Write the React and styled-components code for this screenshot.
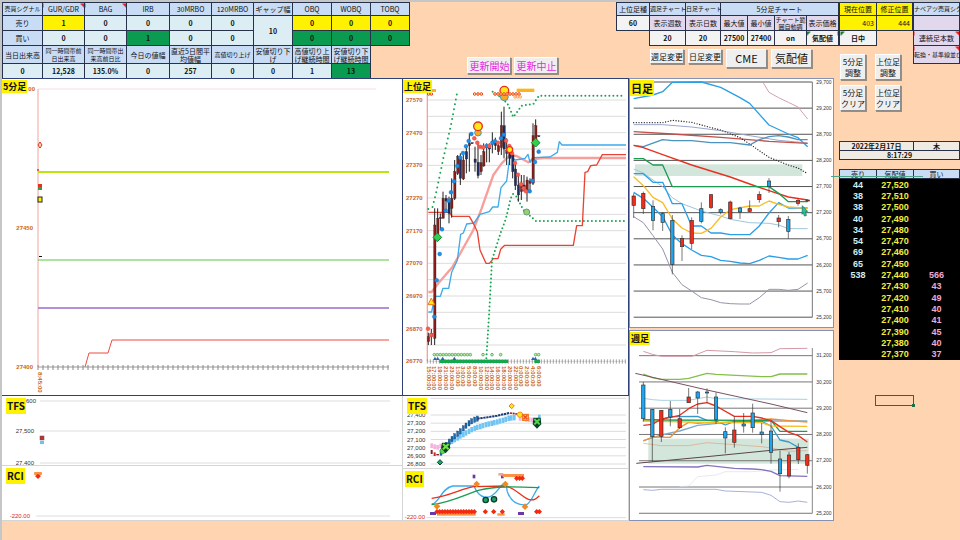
import styled, { createGlobalStyle, css } from 'styled-components'

const GlobalStyle = createGlobalStyle`
	* {
		box-sizing: border-box;
	}

	body {
		margin: 0;
		background: #ffd5b1;
		color: #111;
		font-family: 'Noto Sans CJK JP', 'Liberation Sans', sans-serif;
		font-size: 7px;
		line-height: 8px;
	}
`

const colors = {
	head: '#c9dcf5',
	value: '#dceef4',
	yellow: '#fff200',
	green: '#0a9b50',
	lavender: '#e2d8ee',
	plain: '#f3f3f3',
	navy: '#2f3f77',
	blue: '#2b9fe6',
	red: '#e8301f',
}

const Page = styled.div`
	display: flex;
	min-height: 100vh;
	overflow: hidden;
	border-top: 2px solid #c4c6c8;
	border-left: 2px solid #c4c6c8;
`

const Main = styled.main`
	flex: 1;
	min-width: 0;
`

const Side = styled.aside`
	flex: none;
	width: 121px;
`

const Header = styled.header`
	display: flex;
	justify-content: space-between;
	height: 76px;
`

const Table = styled.table`
	border-collapse: collapse;
	table-layout: fixed;
	width: ${({ $width }) => $width}px;
`

const Row = styled.tr`
	height: ${({ $height }) => $height}px;
`

const Cell = styled.td`
	padding: 0 ${({ $align }) => ($align === 'right' ? 2 : 0)}px 0 0;
	border: 1px solid #27324a;
	background: ${({ $bg }) => $bg || colors.value};
	font-weight: ${({ $bold }) => ($bold ? 700 : 400)};
	font-size: ${({ $small }) => ($small ? 6 : 7)}px;
	line-height: ${({ $tight }) => ($tight ? 7 : 8)}px;
	text-align: ${({ $align }) => $align || 'center'};
	white-space: nowrap;

	${({ $note }) =>
		$note &&
		css`
			background-image: linear-gradient(
				${$note === 'green' ? '135deg, #1a7a2c' : '225deg, #e02020'} 3px,
				transparent 3px
			);
		`}

	${({ $empty }) =>
		$empty &&
		css`
			border: none;
			background: none;
		`}
`

const Button = styled.button`
	padding: 0;
	border: 1px solid;
	border-color: #fff #8c8c8c #8c8c8c #fff;
	box-shadow: 1px 1px 0 #9a8d80;
	background: #efefef;
	color: ${({ $color }) => $color || '#111'};
	font-family: inherit;
	font-size: ${({ $size }) => $size || 8}px;
	line-height: 11px;
	width: ${({ $width }) => $width}px;
	height: ${({ $height }) => $height}px;
	white-space: nowrap;
	cursor: pointer;
`

const UpdateButtons = styled.div`
	display: flex;
	align-self: flex-end;
	gap: 3px;
	margin-bottom: 4px;
`

const ChangeButtons = styled.div`
	display: flex;
	align-items: flex-start;
	gap: 4px;
	padding: 3px 0 0 34px;
`

const Charts = styled.div`
	display: grid;
	grid-template-columns: 401fr 226fr 205fr;
	align-items: start;
	padding-right: 5px;
`

const ChartColumn = styled.div`
	display: grid;
	min-width: 0;
	gap: ${({ $gap }) => $gap || 0}px;
`

const Panel = styled.section`
	position: relative;
	background: #fff;
	border: 0 solid #d5d5d5;
	border-width: 0 1px 1px 0;

	${({ $kind }) =>
		$kind === 'main' &&
		css`
			border-color: ${colors.navy};
			border-width: 1px 1px 1px 0;
		`}

	${({ $kind }) =>
		$kind === 'boxed' &&
		css`
			border-color: #8592b5;
			border-width: 1px;
		`}
`

const PanelTitle = styled.h2`
	position: absolute;
	top: ${({ $inset }) => ($inset ? 2 : 1)}px;
	left: ${({ $inset }) => $inset || 0}px;
	margin: 0;
	padding: 0 1px;
	background: ${colors.yellow};
	font-size: ${({ $size }) => $size || 9}px;
	line-height: ${({ $tall }) => ($tall ? 16 : 13)}px;
	font-weight: 700;
	white-space: nowrap;
`

const Plot = styled.svg`
	display: block;
	width: 100%;
	height: auto;
`

const Line = styled.polyline`
	fill: none;
	stroke: ${({ $color }) => $color};
	stroke-width: ${({ $width }) => $width || 3};
	stroke-linejoin: round;

	${({ $dotted }) =>
		$dotted &&
		css`
			stroke-linecap: round;
			stroke-dasharray: 0 ${$dotted};
		`}
`

const AxisText = styled.text`
	fill: ${({ $color }) => $color || '#333'};
	font-family: 'Liberation Sans', sans-serif;
	font-size: ${({ $size }) => $size || 18}px;
	font-weight: ${({ $bold }) => ($bold ? 700 : 400)};
	text-anchor: ${({ $start }) => ($start ? 'start' : 'end')};
`

const SideTop = styled.div`
	display: flex;
	align-items: flex-start;
	height: 106px;
`

const SideButtons = styled.div`
	display: grid;
	grid-template-columns: 26px 26px;
	gap: 5px 9px;
	padding: 8px 0 0 1px;
`

const DateTable = styled(Table)`
	margin-top: 33px;
`

const Orders = styled.div`
	position: relative;
	margin-top: 9px;

	&::after {
		content: '';
		position: absolute;
		top: 7px;
		left: -8px;
		width: 92px;
		height: 1px;
		background: #4da58a;
	}
`

const OrderTable = styled(Table)`
	height: 191px;
	background: #000;
`

const OrderCell = styled.td`
	padding: 0;
	color: ${({ $color }) => $color};
	font-family: 'Liberation Sans', sans-serif;
	font-size: 9px;
	font-weight: 700;
	line-height: 10px;
	text-align: center;
`

const SelectedCell = styled.div`
	position: relative;
	width: 39px;
	height: 11px;
	margin: 35px 0 0 36px;
	border: 1px solid #1d7044;

	&::after {
		content: '';
		position: absolute;
		right: -2px;
		bottom: -2px;
		width: 3px;
		height: 3px;
		background: #1d7044;
	}
`

const Cols = ({ widths }) => (
	<colgroup>
		{widths.map((w, i) => (
			<col key={i} style={{ width: w }} />
		))}
	</colgroup>
)

const range = (from, to, step) => {
	const out = []
	for (let v = from; v <= to; v += step) out.push(v)
	return out
}

const SignalTable = () => (
	<Table $width={407}>
		<Cols widths={[40, 42, 42, 43, 42, 42, 39, 39, 39, 39]} />
		<tbody>
			<Row $height={13}>
				<Cell $small $bg={colors.head}>売買シグナル</Cell>
				<Cell $bg={colors.head} $note="red">GUR/GDR</Cell>
				<Cell $bg={colors.head} $note="red">BAG</Cell>
				{['IRB', '30MRBO', '120MRBO', 'ギャップ幅', 'OBQ', 'WOBQ', 'TOBQ'].map((t) => (
					<Cell key={t} $bg={colors.head}>{t}</Cell>
				))}
			</Row>
			<Row $height={15}>
				<Cell $bg={colors.head}>売り</Cell>
				<Cell $bold $bg={colors.yellow}>1</Cell>
				<Cell $bold>0</Cell>
				<Cell $bold>0</Cell>
				<Cell $bold>0</Cell>
				<Cell $bold>0</Cell>
				<Cell $bold rowSpan={2}>10</Cell>
				<Cell $bold $bg={colors.yellow}>0</Cell>
				<Cell $bold $bg={colors.yellow}>0</Cell>
				<Cell $bold $bg={colors.yellow}>0</Cell>
			</Row>
			<Row $height={15}>
				<Cell $bg={colors.head}>買い</Cell>
				<Cell $bold>0</Cell>
				<Cell $bold>0</Cell>
				<Cell $bold $bg={colors.green}>1</Cell>
				<Cell $bold>0</Cell>
				<Cell $bold>0</Cell>
				<Cell $bold $bg={colors.green}>0</Cell>
				<Cell $bold $bg={colors.green}>0</Cell>
				<Cell $bold $bg={colors.green}>0</Cell>
			</Row>
			<Row $height={18}>
				<Cell $bg={colors.head}>当日出来高</Cell>
				<Cell $small $bg={colors.head}>同一時間帯前<br />日出来高</Cell>
				<Cell $small $bg={colors.head}>同一時間帯出<br />来高前日比</Cell>
				<Cell $bg={colors.head}>今日の値幅</Cell>
				<Cell $bg={colors.head}>直近5日間平<br />均値幅</Cell>
				<Cell $small $bg={colors.head}>高値切り上げ</Cell>
				<Cell $bg={colors.head}>安値切り下<br />げ</Cell>
				<Cell $bg={colors.head}>高値切り上<br />げ継続時間</Cell>
				<Cell $bg={colors.head}>安値切り下<br />げ継続時間</Cell>
				<Cell $empty />
			</Row>
			<Row $height={15}>
				{['0', '12,528', '135.0%', '0', '257', '0', '0', '1'].map((v, i) => (
					<Cell key={i} $bold>{v}</Cell>
				))}
				<Cell $bold $bg={colors.green}>13</Cell>
				<Cell $empty />
			</Row>
		</tbody>
	</Table>
)

const SettingsTable = () => (
	<Table $width={222}>
		<Cols widths={[33, 36, 35, 27, 27, 32, 32]} />
		<tbody>
			<Row $height={13}>
				<Cell $bg={colors.head}>上位足種</Cell>
				<Cell $small $bg={colors.head}>週足チャート</Cell>
				<Cell $small $bg={colors.head}>日足チャート</Cell>
				<Cell $bg={colors.head} colSpan={4}>5分足チャート</Cell>
			</Row>
			<Row $height={15}>
				<Cell $bold $bg={colors.plain}>60</Cell>
				<Cell $bg={colors.lavender}>表示週数</Cell>
				<Cell $bg={colors.lavender}>表示日数</Cell>
				<Cell $bg={colors.lavender}>最大値</Cell>
				<Cell $bg={colors.lavender}>最小値</Cell>
				<Cell $small $tight $bg={colors.lavender}>チャート範<br />囲自動調</Cell>
				<Cell $bg={colors.lavender}>表示価格</Cell>
			</Row>
			<Row $height={15}>
				<Cell $empty />
				<Cell $bold $bg={colors.plain}>20</Cell>
				<Cell $bold $bg={colors.plain}>20</Cell>
				<Cell $bold $bg={colors.plain}>27500</Cell>
				<Cell $bold $bg={colors.plain}>27400</Cell>
				<Cell $bold $bg={colors.plain}>on</Cell>
				<Cell $bold $bg={colors.plain} $note="green">気配値</Cell>
			</Row>
		</tbody>
	</Table>
)

const FiveMinuteChart = () => (
	<Panel $kind="main">
		<Plot viewBox="2 79 400 316">
			<Line points="38,89 376,89" $color="#f6dcea" $width={1} />
			<Line points="38,89 38,367" $color="#f2a39b" $width={1} />
			<Line points="38,172 389,172" $color="#b9e610" $width={2} />
			<Line points="38,260 389,260" $color="#5cc845" $width={1} />
			<Line points="38,308 389,308" $color="#b391d6" $width={2} />
			<Line points="85,367 89,353 108,353 112,340 389,340" $color="#ef4b3f" $width={1} />
			<Line points="38,367 389,367" $color="#999" $width={1} />
			{range(38, 389, 5).map((x) => (
				<Line key={x} points={`${x},365 ${x},370`} $color="#888" $width={1} />
			))}
			<AxisText x="35" y="91" $color="#c8661c" $size={6} $bold>00</AxisText>
			<AxisText x="33" y="230" $color="#c8661c" $size={6} $bold>27450</AxisText>
			<AxisText x="33" y="369" $color="#c8661c" $size={6} $bold>27400</AxisText>
			<AxisText transform="translate(38 372) rotate(90)" $color="#c8661c" $size={6} $start $bold>8:45:00</AxisText>
			<path d="M40 142l2 3-2 3-2-3z" fill="#ffd9b0" stroke="#e8301f" />
			<circle cx="38" cy="170" r="1" fill="#e8301f" />
			<rect x="38" y="184" width="4" height="3" fill="#e8301f" />
			<rect x="38" y="187" width="4" height="3" fill="#2aa050" />
			<rect x="38" y="197" width="4" height="5" fill="#fff200" stroke="#222" />
			<rect x="39" y="256" width="3" height="1" fill="#111" />
		</Plot>
		<PanelTitle>5分足</PanelTitle>
	</Panel>
)

const FiveMinuteTfs = () => (
	<Panel>
		<Plot viewBox="2 396 400 69">
			{[401, 431, 463].map((y, i) => (
				<g key={y}>
					<Line points={`40,${y} 390,${y}`} $color="#ddd" $width={1} />
					<AxisText x={i ? 34 : 36} y={y + 2} $size={6}>{['600', '27,500', '27,400'][i]}</AxisText>
				</g>
			))}
			<rect x="40" y="436" width="4" height="4" fill="#c3302a" stroke="#555" strokeWidth="0.5" />
			<rect x="40" y="441" width="4" height="3" fill="#6cc3ef" />
		</Plot>
		<PanelTitle $inset={4} $size={10} $tall>TFS</PanelTitle>
	</Panel>
)

const FiveMinuteRci = () => (
	<Panel>
		<Plot viewBox="2 466 400 54">
			<Line points="36,516 390,516" $color="#ddd" $width={1} />
			<AxisText x="30" y="518" $color="#d8261c" $size={6}>-220.00</AxisText>
			<rect x="34" y="472" width="8" height="3" rx="1" fill="#fb9344" />
			<path d="M38 474l3 2-3 3-3-3z" fill="#f22a10" />
		</Plot>
		<PanelTitle $inset={4} $size={10} $tall>RCI</PanelTitle>
	</Panel>
)

// x, high, low, body top, body bottom, rising
const upperCandles = [
	[85, 773, 810, 785, 800, 1], [94, 762, 810, 775, 785, 1], [104, 400, 810, 450, 790, 1],
	[113, 400, 480, 430, 478, 1], [121, 415, 465, 428, 431, 0], [129, 350, 430, 370, 430, 1],
	[138, 360, 412, 370, 378, 0], [147, 365, 445, 375, 415, 0], [155, 310, 428, 370, 400, 1],
	[164, 255, 375, 290, 370, 1], [173, 240, 300, 245, 295, 1], [181, 235, 330, 250, 310, 0],
	[190, 240, 315, 255, 312, 1], [199, 215, 295, 230, 252, 0], [208, 175, 290, 205, 212, 1],
	[216, 203, 206, 203, 206, 0], [225, 215, 290, 252, 262, 0], [234, 205, 310, 262, 302, 0],
	[243, 240, 300, 263, 290, 1], [251, 205, 275, 230, 273, 1], [260, 205, 262, 212, 218, 1],
	[268, 205, 262, 218, 222, 0], [277, 172, 235, 200, 208, 0], [286, 188, 225, 198, 212, 0],
	[295, 205, 240, 212, 230, 1], [304, 110, 240, 152, 218, 1], [312, 95, 250, 152, 222, 0],
	[320, 190, 270, 225, 235, 0], [329, 210, 270, 232, 250, 0], [338, 235, 310, 240, 290, 0],
	[346, 260, 345, 282, 332, 0], [355, 295, 380, 330, 360, 0], [364, 300, 375, 325, 350, 1],
	[372, 300, 350, 330, 345, 0], [381, 305, 380, 315, 350, 1], [390, 310, 350, 318, 325, 1],
	[399, 145, 330, 182, 325, 1], [407, 133, 200, 152, 200, 1], [416, 182, 185, 182, 185, 0],
]

const upperBlueDots = [
	[103, 725], [110, 616], [119, 537], [126, 463], [137, 407], [146, 377], [153, 352], [162, 319],
	[172, 273], [181, 248], [189, 234], [198, 214], [206, 198], [214, 177], [260, 213], [277, 203],
	[285, 199], [303, 190], [311, 179], [416, 230], [405, 261], [397, 317], [389, 349],
]

const upperRedDots = [
	[84, 761], [93, 780], [223, 190], [232, 203], [240, 215], [249, 217], [268, 213], [294, 203],
	[318, 197], [328, 213], [336, 235], [345, 264], [354, 299], [363, 328], [371, 340], [378, 349],
]

const upperHours = [15, 17, 19, 21, 23, 1, 3, 5, 8, 10, 12, 14, 16, 18, 20, 22, 0, 2, 4, 6]

const Diamond = ({ x, y, r, ...rest }) => (
	<path d={`M${x} ${y - r}l${r} ${r}l${-r} ${r}l${-r} ${-r}z`} {...rest} />
)

const UpperChart = () => (
	<Panel $kind="main">
		<Plot viewBox="9 12 675 948">
			{range(0, 16, 1).map((i) => (
				<Line key={i} points={`82,${75 + i * 49} 678,${75 + i * 49}`} $color="#dcdcdc" />
			))}
			{range(0, 8, 1).map((i) => (
				<AxisText key={i} x="68" y={81 + i * 98} $color="#c8661c" $bold>{27570 - i * 100}</AxisText>
			))}
			<Line points="82,50 82,859" $color="#f2a39b" $width={4} />
			{range(82, 678, 9).map((x) => (
				<Line key={x} points={`${x},853 ${x},866`} $color="#777" $width={2} />
			))}
			{upperHours.map((h, i) => (
				<AxisText
					key={i}
					transform={`translate(${80 + Math.round(i * 17.4)} 873) rotate(90)`}
					$color="#c8661c"
					$start
					$bold
				>
					{h}:00:00
				</AxisText>
			))}
			<rect x="118" y="854" width="206" height="10" fill="#17a650" />
			<rect x="403" y="854" width="17" height="10" fill="#17a650" />

			<Line points="85,651 95,651 115,625 158,575 178,540 220,465 245,400 280,300 305,265 330,240 350,243 385,262 400,252 430,249 678,249" $color="#f79f9a" $width={7} />
			<Line points="85,711 95,711 104,664 121,664 129,640 146,640 155,592 172,556 182,478 190,474 200,447 222,444 240,418 268,410 278,396 294,396 303,338 320,318 330,240 345,255 365,252 375,250 384,238 390,262 398,248 450,246 472,232 478,200 486,210 678,210" $color="#3dabeb" $width={4} />
			<Line points="85,412 148,412 156,424 208,424 220,445 232,470 240,525 258,565 268,565 280,551 294,551 302,523 314,511 520,511 530,452 547,452 555,292 563,290 572,272 590,270 607,239 678,239" $color="#e84335" $width={4} />
			<Line points="85,402 97,398 108,355 130,250 153,150 171,55" $color="#17a650" $width={6} $dotted={15} />
			<Line points="278,50 300,65 322,85 340,126 365,92 400,87 417,62 672,62" $color="#17a650" $width={6} $dotted={12} />
			<Line points="259,850 268,705 276,555 302,473 318,430 332,370 339,357 350,365 370,405 408,438 672,438" $color="#17a650" $width={6} $dotted={12} />

			{upperCandles.map(([x, high, low, top, bottom, up]) => (
				<g key={x}>
					<Line points={`${x},${high} ${x},${low}`} $color="#222" />
					<rect x={x - 3} y={top} width="7" height={Math.max(bottom - top, 3)} fill={up ? '#8c1d18' : '#1f2d63'} stroke="#222" />
				</g>
			))}
			{upperBlueDots.map(([x, y]) => (
				<circle key={y} cx={x} cy={y} r="6" fill="#1a8fe8" stroke="#1668b8" />
			))}
			{upperRedDots.map(([x, y]) => (
				<circle key={y} cx={x} cy={y} r="6" fill="#fb5b50" stroke="#d83a30" />
			))}
			{[...range(103, 215, 9), 249, 276, 302, 407, 416].map((x) => (
				<circle key={x} cx={x} cy="839" r="4" fill="#c8efb0" stroke="#2d9a3f" strokeWidth="2" />
			))}
			{[105, 113, 128, 163, 399, 406].map((x) => (
				<path key={x} d={`M${x} 845l6 10h-12z`} fill="#2f62b5" />
			))}

			<rect x="86" y="42" width="22" height="9" fill="#fdb515" />
			<rect x="350" y="41" width="53" height="10" fill="#fdb515" />
			<circle cx="313" cy="65" r="12" fill="#f7a823" stroke="#3ba0c4" strokeWidth="3" />
			<circle cx="313" cy="47" r="13" fill="#ffe81a" stroke="#e8301f" strokeWidth="4" />
			{[86, 94, 224, 234, 244, ...range(285, 358, 9)].map((x) => (
				<circle key={x} cx={x} cy="57" r="4" fill="#ffe2a0" stroke="#ee4a1e" strokeWidth="3" />
			))}
			{[345, 353, 361].map((x) => (
				<circle key={x} cx={x} cy="66" r="4" fill="#ffe2a0" stroke="#f9925a" strokeWidth="2" />
			))}
			<circle cx="234" cy="173" r="10" fill="#f7a823" stroke="#3ba0c4" strokeWidth="3" />
			<circle cx="234" cy="154" r="13" fill="#ffe81a" stroke="#e8301f" strokeWidth="4" />
			<circle cx="329" cy="224" r="9" fill="#ffe81a" stroke="#e8301f" strokeWidth="4" />
			<Diamond x={407} y={203} r={13} fill="#2fd04a" stroke="#128a35" strokeWidth="3" />
			<Diamond x={112} y={487} r={13} fill="#2fd04a" stroke="#128a35" strokeWidth="3" />
			<circle cx="380" cy="411" r="9" fill="#9bcf6e" stroke="#5a9e7e" strokeWidth="3" />
			<path d="M94 669l10 20h-20z" fill="#ffe81a" stroke="#f07a1a" strokeWidth="3" />
		</Plot>
		<PanelTitle>上位足</PanelTitle>
	</Panel>
)

const tfsDark = [
	[123, 188], [131, 176], [139, 165], [148, 155], [156, 147], [164, 139], [173, 131], [181, 124],
	[190, 115], [198, 107], [207, 100], [215, 94], [224, 89], [232, 86],
]

const tfsLight = [
	[148, 158], [156, 154], [164, 149], [173, 144], [181, 138], [190, 134], [198, 129], [207, 124],
	[215, 119], [224, 115], [232, 112], [241, 110], [249, 107], [258, 104], [266, 102], [275, 100],
	[283, 98], [292, 96], [300, 93], [309, 91], [317, 88], [326, 85], [334, 84], [343, 83], [418, 82],
]

const UpperTfs = () => (
	<Panel>
		<Plot viewBox="9 18 675 216">
			<Line points="92,25 678,25" $color="#dcdcdc" />
			{['27,400', '27,300', '27,200', '27,100', '27,000', '26,900', '26,800'].map((t, i) => (
				<g key={t}>
					<Line points={`92,${75 + i * 24.5} 678,${75 + i * 24.5}`} $color="#dcdcdc" />
					<AxisText x="76" y={81 + i * 24.5}>{t}</AxisText>
				</g>
			))}
			{[[95, 167], [104, 170], [113, 172], [122, 168], [360, 85], [378, 88], [387, 89], [396, 90]].map(([x, y]) => (
				<rect key={x} x={x - 4} y={y - 7} width="8" height="14" fill="#f5b3de" />
			))}
			{tfsLight.map(([x, y]) => (
				<rect key={x} x={x - 4} y={y - 8} width="8" height="16" fill="#70c5f4" />
			))}
			{tfsDark.map(([x, y]) => (
				<rect key={x} x={x - 3} y={y - 8} width="6" height="16" fill="#176eb5" stroke="#123768" strokeWidth="1" />
			))}
			<Line points="232,86 262,82 292,77 328,69" $color="#173a78" $width={6} strokeDasharray="7 2" />
			<Line points="330,69 352,72" $color="#9a2020" $width={5} strokeDasharray="6 2" />
			<rect x="92" y="180" width="6" height="12" fill="#8f2222" />
			<rect x="101" y="187" width="6" height="11" fill="#c42b2b" />
			<rect x="109" y="192" width="8" height="4" fill="#8f2222" />
			<Diamond x={120} y={217} r={8} fill="#17a56c" stroke="#0e4030" strokeWidth="3" />
			<circle cx="128" cy="183" r="8" fill="#5fd84d" stroke="#1f8f46" strokeWidth="2" />
			<path d="M126 158h22l3 16-14 16-14-16z" fill="#0f3f2a" />
			<path d="M129 162l17 16M146 162l-17 16" stroke="#72e83f" strokeWidth="6" />
			<Diamond x={335} y={48} r={8} fill="#ffe81a" stroke="#ee7a1a" strokeWidth="3" />
			<circle cx="360" cy="74" r="8" fill="#ffe81a" stroke="#ee9a1a" strokeWidth="3" />
			<rect x="367" y="73" width="18" height="18" fill="#ffd21a" stroke="#f06a1a" strokeWidth="3" />
			<path d="M370 76l12 12M382 76l-12 12" stroke="#ee4a1e" strokeWidth="4" />
			<path d="M400 83h22l2 20-13 13-13-13z" fill="#0f3f2a" />
			<path d="M403 87l16 16M419 87l-16 16" stroke="#4fd84a" strokeWidth="6" />
		</Plot>
		<PanelTitle $inset={4} $size={10} $tall>TFS</PanelTitle>
	</Panel>
)

const UpperRci = () => (
	<Panel>
		<Plot viewBox="9 237 675 153">
			<Line points="80,383 678,383" $color="#dcdcdc" />
			<AxisText x="75" y="388" $color="#d8261c">-220.00</AxisText>
			<g fill="none" strokeWidth="4">
				<path d="M95 342C118 340 122 296 158 288L222 288C238 328 268 334 295 298S318 290 322 305C336 344 362 346 380 344C396 335 406 300 418 288" stroke="#3dabeb" />
				<path d="M95 325C150 318 180 298 220 290L318 288C345 294 372 326 388 329S408 326 418 317" stroke="#e8301f" />
				<path d="M95 344C150 338 195 314 235 301C290 288 340 290 418 293" stroke="#1b9c52" />
			</g>
			<rect x="218" y="254" width="8" height="11" fill="#6b38a8" />
			<rect x="303" y="254" width="8" height="11" fill="#6b38a8" />
			<rect x="90" y="366" width="18" height="9" fill="#6b38a8" />
			<rect x="354" y="366" width="18" height="9" fill="#6b38a8" />
			<rect x="295" y="249" width="15" height="8" fill="#efa5a0" />
			<rect x="308" y="252" width="64" height="9" fill="#fb9344" />
			<rect x="111" y="368" width="116" height="9" fill="#fb9344" />
			<rect x="292" y="370" width="22" height="7" fill="#fb9344" />
			{[...range(111, 223, 8), 256, 281, 307, 410, 418].map((x) => (
				<Diamond key={x} x={x} y={365} r={8} fill="#f22a10" />
			))}
			{[350, 359, 367].map((x) => (
				<Diamond key={x} x={x} y={265} r={8} fill="#f22a10" />
			))}
			{[[111, 349], [230, 282], [316, 282], [375, 350]].map(([x, y]) => (
				<Diamond key={x} x={x} y={y} r={10} fill="#f28a22" />
			))}
			<circle cx="257" cy="330" r="8" fill="#17a56c" stroke="#0e3a28" strokeWidth="4" />
			<circle cx="282" cy="328" r="8" fill="#17a56c" stroke="#0e3a28" strokeWidth="4" />
		</Plot>
		<PanelTitle $inset={2} $size={10} $tall>RCI</PanelTitle>
	</Panel>
)

const Candle = ({ data: [x, high, low, top, bottom, up] }) => (
	<g stroke="#333" strokeWidth="2">
		<path d={`M${x} ${high}V${low}`} />
		<rect x={x - 5} y={top} width="10" height={bottom - top} fill={up ? '#f02c1c' : '#1fa4ee'} />
	</g>
)

const dailyCandles = [
	[20, 355, 429, 363, 391, 1], [49, 350, 417, 355, 401, 1], [78, 376, 466, 394, 436, 0],
	[107, 412, 468, 416, 442, 0], [136, 420, 598, 436, 568, 0], [165, 481, 558, 490, 515, 1],
	[194, 427, 522, 436, 505, 1], [223, 382, 445, 401, 439, 0], [252, 358, 402, 359, 397, 1],
	[281, 400, 418, 404, 412, 0], [310, 377, 433, 381, 431, 1], [339, 395, 432, 399, 411, 0],
	[368, 376, 411, 401, 409, 1], [397, 349, 383, 358, 374, 1], [426, 309, 354, 318, 335, 0],
	[455, 420, 457, 429, 440, 1], [484, 423, 491, 433, 469, 0], [513, 371, 392, 376, 385, 1],
	[542, 374, 380, 375, 378, 1],
]

const DailyChart = () => (
	<Panel $kind="boxed">
		<Plot viewBox="9 12 609 744">
			<rect x="24" y="268" width="502" height="35" fill="#d3e6dc" />
			{range(0, 9, 1).map((i) => (
				<g key={i}>
					<Line points={`20,${21 + i * 78.4} 556,${21 + i * 78.4}`} $color="#555" />
					<AxisText x="568" y={26 + i * 78.4} $size={15} $start>{(29700 - i * 500).toLocaleString('en-US')}</AxisText>
				</g>
			))}
			<Line points="556,21 556,727" $color="#777" />
			<Line points="20,425 49,443 78,482 107,522 136,592 165,629 194,648 223,668 252,674 281,683 310,686 339,687 368,687 397,668 426,643 455,643 484,646 513,643 542,624" $color="#9a91a8" $width={3} />
			<Line points="408,22 426,52 455,68 484,82 513,96 542,132" $color="#d6a0ac" $width={3} />
			<Line points="20,71 78,60 107,50 136,22 223,21 281,37 339,68 368,85 426,150 484,177 513,188 542,215" $color={colors.blue} $width={4} />
			<Line points="20,149 107,149 194,156 281,167 368,182 455,196 542,204" $color="#9aa5cc" />
			<Line points="20,170 136,177 281,187 426,199 542,205" $color="#c4504b" $width={4} />
			<Line points="20,211 49,215 107,194 136,197 194,197 252,203 310,203 368,210 397,194 426,185 455,182 484,186 513,194 542,194" $color="#4c93bd" $width={4} />
			<Line points="20,143 107,143 136,136 194,142 252,158 281,165 339,188 368,207 397,227 426,247 484,270 513,279 542,296" $color="#222" $width={4} $dotted={8} />
			<Line points="20,211 49,218 107,239 194,270 310,306 368,327 426,347 484,366 542,375" $color={colors.red} $width={4} />
			<Line points="20,251 49,251 78,270 107,270 136,335 426,335 455,355 484,380 542,380" $color="#1b9c52" $width={4} />
			<Line points="20,282 49,294 78,315 107,335 136,368 165,386 223,408 281,423 310,433 368,443 426,445 455,450 484,461 542,461" $color="#9fc5dc" $width={3} />
			<Line points="20,296 49,296 78,322 107,322 136,386 165,386 194,453 223,453 252,474 281,474 310,479 368,479 397,453 426,414 455,383 484,399 542,399" $color={colors.blue} $width={4} />
			<Line points="20,305 49,332 78,367 107,383 136,432 165,459 194,474 223,475 252,460 281,426 310,404 368,393 397,393 426,378 455,388 484,396 542,400" $color="#f8bd25" $width={4} />
			<Line points="20,352 49,370 78,397 107,425 136,480 165,506 194,525 223,541 252,545 281,556 310,559 339,564 368,566 397,556 426,543 455,547 484,552 513,552 542,541" $color={colors.blue} $width={4} />
			{dailyCandles.map((c) => (
				<Candle key={c[0]} data={c} />
			))}
			<path d="M526 392l16 17-6 1 2 12-6 1-3-10-4 5z" fill="#25c49a" stroke="#156a5a" strokeWidth="2" />
		</Plot>
		<PanelTitle $size={11} $tall>日足</PanelTitle>
	</Panel>
)

const weeklyCandles = [
	[49, 186, 305, 195, 296, 0], [76, 267, 425, 268, 350, 0], [103, 270, 366, 271, 349, 1],
	[130, 243, 319, 268, 291, 0], [158, 267, 327, 296, 323, 1], [185, 204, 249, 231, 248, 1],
	[212, 213, 282, 216, 234, 0], [240, 205, 248, 216, 219, 0], [267, 217, 312, 231, 298, 0],
	[295, 322, 400, 335, 354, 0], [322, 290, 383, 330, 367, 1], [350, 279, 338, 312, 318, 0],
	[377, 251, 338, 279, 323, 0], [404, 309, 370, 336, 344, 0], [432, 303, 431, 333, 397, 0],
	[459, 391, 515, 417, 461, 0], [486, 396, 475, 405, 468, 1], [514, 370, 432, 382, 419, 1],
	[541, 402, 461, 404, 436, 1],
]

const WeeklyChart = () => (
	<Panel $kind="boxed">
		<Plot viewBox="9 33 609 567">
			<rect x="64" y="356" width="481" height="75" fill="#d3e6dc" />
			{range(0, 6, 1).map((i) => (
				<g key={i}>
					<Line points={`36,${107 + i * 78.8} 556,${107 + i * 78.8}`} $color="#777" />
					<AxisText x="568" y={112 + i * 78.8} $size={15} $start>{(31200 - i * 1000).toLocaleString('en-US')}</AxisText>
				</g>
			))}
			<Line points="556,84 556,580" $color="#888" />
			<Line points="49,94 76,103 103,109 195,109 240,91 322,95 377,99 432,98 459,86 541,85" $color="#d49aa6" />
			<Line points="49,162 76,173 103,178 158,178 185,175 240,160 267,163 404,170 432,170 459,162 541,162" $color="#84bf4a" $width={4} />
			<Line points="49,235 76,239 103,241 185,241 212,236 240,231 267,236 541,238" $color="#a9cfe0" />
			<Line points="25,160 240,210 432,252 541,278" $color="#7a5260" />
			<Line points="158,500 185,498 212,470 267,465 295,455 377,455 432,450 514,448" $color="#dcdcea" $width={2} />
			<Line points="49,370 103,377 185,377 240,368 322,374 404,380 432,384 486,394 541,392" $color="#e3a27b" $width={2} />
			<Line points="49,362 103,345 158,333 212,316 295,308 377,306 432,303 541,303" $color="#7daacb" $width={4} />
			<Line points="49,363 76,351 130,352 158,323 185,307 212,310 240,308 267,309 432,297 486,302 541,306" $color="#ef9038" $width={4} />
			<Line points="49,300 103,300 130,290 212,289 240,301 267,303 295,315 322,304 404,304 432,318 459,360 486,366 514,382" $color="#3b98c6" $width={4} />
			<Line points="49,300 432,301 459,334 541,334" $color="#1b9c52" $width={4} />
			<Line points="49,303 267,308 404,308 432,318 541,319" $color="#f8bd25" $width={4} />
			<Line points="49,316 76,313 103,297 130,292 158,286 185,266 212,252 240,248 267,258 322,289 377,289 404,294 432,302 459,320 486,337 514,347 541,366" $color={colors.red} $width={4} />
			<Line points="28,430 240,410 432,391 541,382" $color="#5c4348" />
			<Line points="49,440 212,441 240,436 322,445 377,447 404,449 432,454 459,467 541,469" $color="#8673bd" $width={4} />
			<Line points="49,509 76,511 103,508 267,508 295,513 404,517 432,526 459,545 486,547 514,543 541,547" $color="#a7b2d9" />
			{weeklyCandles.map((c) => (
				<Candle key={c[0]} data={c} />
			))}
		</Plot>
		<PanelTitle>週足</PanelTitle>
	</Panel>
)

const orders = [
	['44', '27,520', ''], ['38', '27,510', ''], ['38', '27,500', ''], ['40', '27,490', ''],
	['34', '27,480', ''], ['54', '27,470', ''], ['69', '27,460', ''], ['65', '27,450', ''],
	['538', '27,440', '566'], ['', '27,430', '43'], ['', '27,420', '49'], ['', '27,410', '40'],
	['', '27,400', '41'], ['', '27,390', '45'], ['', '27,380', '40'], ['', '27,370', '37'],
]

const SidePanel = () => (
	<Side>
		<SideTop>
			<div>
				<Table $width={73}>
					<Cols widths={[37, 36]} />
					<tbody>
						<Row $height={13}>
							<Cell $bg={colors.yellow}>現在位置</Cell>
							<Cell $bg={colors.yellow}>修正位置</Cell>
						</Row>
						<Row $height={15}>
							<Cell $bg={colors.yellow} $align="right">403</Cell>
							<Cell $bg={colors.yellow} $align="right">444</Cell>
						</Row>
						<Row $height={15}>
							<Cell $bold $bg={colors.plain} $note="green">日中</Cell>
							<Cell $empty />
						</Row>
					</tbody>
				</Table>
				<SideButtons>
					<Button $height={26}>5分足<br />調整</Button>
					<Button $height={26}>上位足<br />調整</Button>
					<Button $height={26}>5分足<br />クリア</Button>
					<Button $height={26}>上位足<br />クリア</Button>
				</SideButtons>
			</div>
			<Table $width={48}>
				<tbody>
					<Row $height={13}>
						<Cell $small $bg={colors.head}>ナベアツ売買シグ</Cell>
					</Row>
					<Row $height={15}>
						<Cell $bg={colors.lavender} />
					</Row>
					<Row $height={15}>
						<Cell $bg={colors.lavender} $note="red">連続足本数</Cell>
					</Row>
					<Row $height={18}>
						<Cell $small $bg={colors.lavender} $note="red">転換・基準線並び</Cell>
					</Row>
				</tbody>
			</Table>
		</SideTop>
		<DateTable $width={120}>
			<Cols widths={[74, 46]} />
			<tbody>
				<Row $height={9}>
					<Cell $bold $bg="#efeae2">2022年2月17日</Cell>
					<Cell $bold $bg="#efeae2">木</Cell>
				</Row>
				<Row $height={9}>
					<Cell $bold $bg="#efeae2" colSpan={2}>8:17:29</Cell>
				</Row>
			</tbody>
		</DateTable>
		<Orders>
			<OrderTable $width={120}>
				<Cols widths={[37, 37, 46]} />
				<tbody>
					<Row $height={9}>
						<Cell $bg={colors.head}>売り</Cell>
						<Cell $bg={colors.head}>気配値</Cell>
						<Cell $bg={colors.head}>買い</Cell>
					</Row>
					{orders.map(([sell, price, buy]) => (
						<tr key={price}>
							<OrderCell $color="#cdeef0">{sell}</OrderCell>
							<OrderCell $color="#f4ec3c">{price}</OrderCell>
							<OrderCell $color="#f2a9cf">{buy}</OrderCell>
						</tr>
					))}
				</tbody>
			</OrderTable>
		</Orders>
		<SelectedCell />
	</Side>
)

const App = () => {
	return (
		<Page>
			<GlobalStyle />
			<Main>
				<Header>
					<SignalTable />
					<UpdateButtons>
						<Button $width={44} $height={17} $size={10} $color="#e62be0">更新開始</Button>
						<Button $width={44} $height={17} $size={10} $color="#e62be0">更新中止</Button>
					</UpdateButtons>
					<div>
						<SettingsTable />
						<ChangeButtons>
							<Button $width={34} $height={15}>週足変更</Button>
							<Button $width={34} $height={15}>日足変更</Button>
							<Button $width={41} $height={19} $size={11}>CME</Button>
							<Button $width={41} $height={19} $size={11}>気配値</Button>
						</ChangeButtons>
					</div>
				</Header>
				<Charts>
					<ChartColumn>
						<FiveMinuteChart />
						<FiveMinuteTfs />
						<FiveMinuteRci />
					</ChartColumn>
					<ChartColumn>
						<UpperChart />
						<UpperTfs />
						<UpperRci />
					</ChartColumn>
					<ChartColumn $gap={2}>
						<DailyChart />
						<WeeklyChart />
					</ChartColumn>
				</Charts>
			</Main>
			<SidePanel />
		</Page>
	)
}

export default App
